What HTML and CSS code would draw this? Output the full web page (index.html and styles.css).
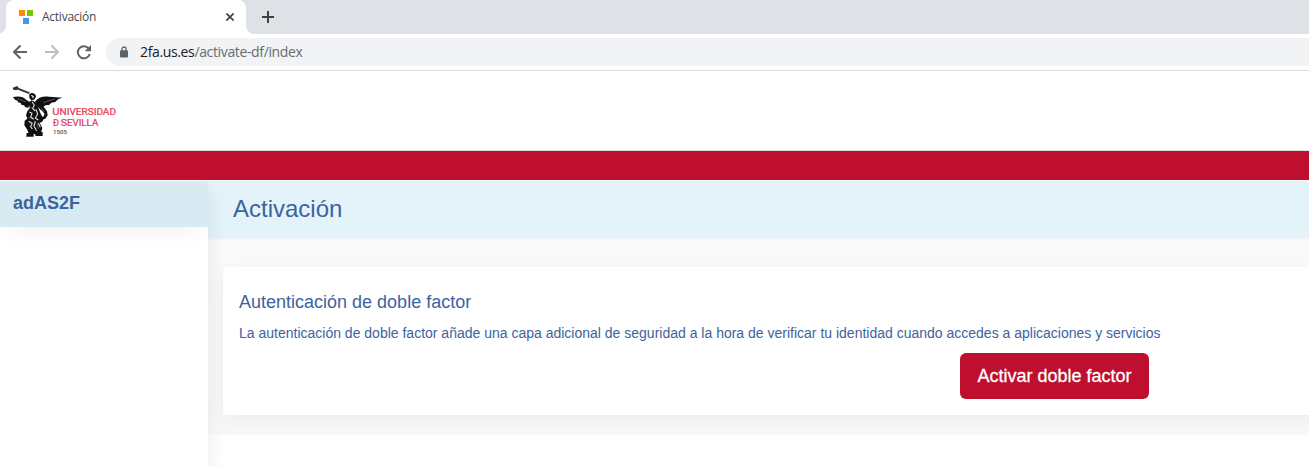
FILE: index.html
```html
<!DOCTYPE html>
<html lang="es">
<head>
<meta charset="utf-8">
<title>Activación</title>
<link rel="stylesheet" href="styles.css">
</head>
<body>
<div class="tabstrip">
  <div class="tab">
    <svg class="favicon" width="14" height="14" viewBox="0 0 14 14"><path fill="#ff8c00" d="M0 0h6v6H0z"/><path fill="#73c800" d="M8 0h6v6H8z"/><path fill="#4596ee" d="M4 8h6v6H4z"/></svg>
    <span class="tab-title">Activación</span>
    <svg class="tab-close" width="8" height="8" viewBox="0 0 8 8"><path d="M.4.4l7.200 7.200M7.600.4L.4 7.600" stroke="#3c4043" stroke-width="1.600"/></svg>
  </div>
  <svg class="tab-new" width="12" height="12" viewBox="0 0 12 12"><path d="M6 0v12M0 6h12" stroke="#3c4043" stroke-width="2"/></svg>
</div>
<div class="toolbar">
  <svg class="nav" width="16" height="16" viewBox="0 0 16 16"><path d="M15 8H2M8.500 1.500L2 8l6.500 6.500" fill="none" stroke="#5f6368" stroke-width="2"/></svg>
  <svg class="nav" width="16" height="16" viewBox="0 0 16 16"><path d="M1 8h13M7.500 1.500L14 8l-6.500 6.500" fill="none" stroke="#bcbec0" stroke-width="2"/></svg>
  <svg class="nav" width="16" height="16" viewBox="0 0 16 16"><path d="M13 4.800A6.100 6.100 0 1 0 13.800 10" fill="none" stroke="#5f6368" stroke-width="2"/><path d="M15 1v6.300H8.700z" fill="#5f6368"/></svg>
  <div class="omnibox">
    <svg width="8" height="12" viewBox="0 0 8 12"><path d="M2 5V3a2 2 0 0 1 4 0v2" fill="none" stroke="#5f6368" stroke-width="1.300"/><rect y="4.300" width="8" height="7.200" rx="1" fill="#5f6368"/></svg>
    <span class="url"><span class="host">2fa.us.es</span>/activate-df/index</span>
  </div>
</div>
<header class="brand">
  <svg class="logo" width="130" height="70" viewBox="0 0 390 210">
    <g fill="#111">
      <path d="M38 35l14-5 4 6-7 7-9-2z" fill="#333"/>
      <path d="M50 34l39 15-2 5-39-15z" fill="#333"/>
      <path d="M39 63c17-4 31-1 39 8l8 5 3 9-4 10-9-1-4-6-7-1-3-6-8-2-1-5-8-3z"/>
      <path d="M105 77c8-11 22-17 41-15l15 1 26 2-13 5-8 8-12 2-7 7-11 1-7 6-12 2-10-8z"/>
      <path d="M88 54l8-4 10 5 2 8-6 8-9 1-5-7z"/>
      <path d="M87 78l8-5 10 5 9 15 8 20 9 16-5 9-7 2 8 15-4 15-17 5-20-3-5-12-8-12 1-14 8-6-4-10 4-12 7-9-3-17z"/>
      <path d="M118 88l13 4 10 14 2 12-7 10-15 4-2-5 12-6 3-7-8-10-8-6z"/>
      <path d="M80 171l21-1v12H79zM107 168h21v12h-22z"/>
    </g>
    <g fill="none" stroke="#ddd" stroke-width="3.500">
      <path d="M94 58l6 4-2 4M96 78l7 9-5 10 8 8"/>
      <path d="M88 108l8 4-4 11 9 7M108 100l5 14-7 12 9 6"/>
      <path d="M86 136l10 6-4 10 5 7M106 135l-4 15 8 14M115 142l6 12"/>
    </g>
    <g stroke="#777" stroke-width="2" fill="none">
      <path d="M53 68l24 10M165 68l-35 12M85 122l8 9M98 139l-5 16M111 140l4 18M90 92l9 8M125 98l8 9"/>
    </g>
    <g class="logo-text">
      <text x="157" y="117" textLength="191" lengthAdjust="spacingAndGlyphs"><tspan font-size="28">U</tspan><tspan font-size="25">NIVERSIDAD</tspan></text>
      <text x="159" y="151" font-size="27" textLength="18" lengthAdjust="spacingAndGlyphs">Đ</text>
      <text x="182" y="151" font-size="28" textLength="113" lengthAdjust="spacingAndGlyphs">S<tspan font-size="26">EVILLA</tspan></text>
    </g>
    <text class="logo-year" x="159" y="175" textLength="42" lengthAdjust="spacingAndGlyphs">1505</text>
  </svg>
</header>
<div class="band"></div>
<div class="layout">
  <aside class="sidebar"><div class="sidebar-title">adAS2F</div></aside>
  <main class="main">
    <h1 class="page-title">Activación</h1>
    <div class="content">
      <section class="card">
        <h2>Autenticación de doble factor</h2>
        <p>La autenticación de doble factor añade una capa adicional de seguridad a la hora de verificar tu identidad cuando accedes a aplicaciones y servicios</p>
        <button class="activate" type="button">Activar doble factor</button>
      </section>
    </div>
  </main>
</div>
</body>
</html>
```
FILE: styles.css
```css
* { box-sizing: border-box; }
body {
  margin: 0;
  height: 467px;
  overflow: hidden;
  display: flex;
  flex-direction: column;
  background: #fff;
  font-family: "Liberation Sans", Arial, sans-serif;
  color: #3d639e;
}
svg { display: block; flex: none; }
.tabstrip {
  height: 34px;
  flex: none;
  display: flex;
  align-items: center;
  background: #dee1e6;
  padding-left: 6px;
}
.tab {
  position: relative;
  width: 240px;
  height: 34px;
  display: flex;
  align-items: center;
  padding: 0 12px 0 13px;
  background: #fff;
  border-radius: 8px 8px 0 0;
}
.tab::before, .tab::after {
  content: "";
  position: absolute;
  bottom: 0;
  width: 8px;
  height: 8px;
}
.tab::before { left: -8px; background: radial-gradient(circle at 0 0, transparent 7.5px, #fff 8px); }
.tab::after { right: -8px; background: radial-gradient(circle at 100% 0, transparent 7.5px, #fff 8px); }
.tab-title {
  flex: 1;
  padding-left: 9px;
  font: 12px/16px "Open Sans", sans-serif;
  letter-spacing: -0.25px;
  color: #45484c;
}
.tab-new { margin-left: 16px; }
.toolbar {
  height: 37px;
  flex: none;
  display: flex;
  align-items: center;
  gap: 16px;
  padding-left: 12px;
  border-bottom: 1px solid #dadce0;
}
.omnibox {
  flex: 1;
  height: 28px;
  margin-left: -2px;
  display: flex;
  align-items: center;
  gap: 12px;
  padding-left: 14px;
  background: #f1f3f4;
  border-radius: 14px 0 0 14px;
}
.url {
  font: 14px/20px "Open Sans", sans-serif;
  letter-spacing: -0.36px;
  color: #686c70;
}
.host { color: #202124; }
.brand {
  height: 80px;
  flex: none;
  padding-top: 5px;
  border-bottom: 1px solid #ddd;
}
.logo-text { font-family: Roboto, sans-serif; fill: #e83a58; stroke: #e83a58; stroke-width: .7px; }
.logo-year { font: 500 18px Roboto, sans-serif; fill: #555; }
.band { height: 29px; flex: none; background: #be0f2e; }
.layout { flex: 1; display: flex; padding-top: 1px; }
.sidebar {
  position: relative;
  z-index: 1;
  width: 208px;
  flex: none;
  background: #fff;
  box-shadow: 0 8px 22px rgba(0, 0, 0, .08);
  clip-path: inset(0 -40px 0 0);
}
.sidebar-title {
  height: 46px;
  padding: 10px 13px;
  background: #d8ebf3;
  font-size: 18px;
  line-height: 24px;
  font-weight: bold;
  box-shadow: 0 12px 22px -8px rgba(0, 0, 0, .06);
}
.main { flex: 1; min-width: 0; }
.page-title {
  position: relative;
  height: 56px;
  margin: 0;
  padding: 14px 25px;
  background: #e4f3fa;
  box-shadow: 0 1px 4px rgba(0, 0, 0, .08);
  font-size: 24px;
  line-height: 28px;
  font-weight: normal;
}
.content {
  height: 198px;
  overflow: hidden;
  padding: 30px 0 0 15px;
  background: #fafafa;
}
.card {
  height: 148px;
  padding: 24px 160px 0 16px;
  margin-right: -12px;
  background: #fff;
  border-radius: 4px;
  box-shadow: 0 8px 24px rgba(0, 0, 0, .06);
  display: flex;
  flex-direction: column;
}
.card h2 {
  margin: 0;
  font-size: 18px;
  line-height: 22px;
  font-weight: normal;
}
.card p {
  margin: 10px 0;
  font-size: 14px;
  line-height: 20px;
  white-space: nowrap;
}
.activate {
  align-self: flex-end;
  margin-right: 12px;
  width: 189px;
  height: 46px;
  padding: 0;
  border: 0;
  border-radius: 6px;
  background: #be0f2e;
  color: #fff;
  font: 18px/24px "Liberation Sans", Arial, sans-serif;
  -webkit-text-stroke: .3px #fff;
}
```
